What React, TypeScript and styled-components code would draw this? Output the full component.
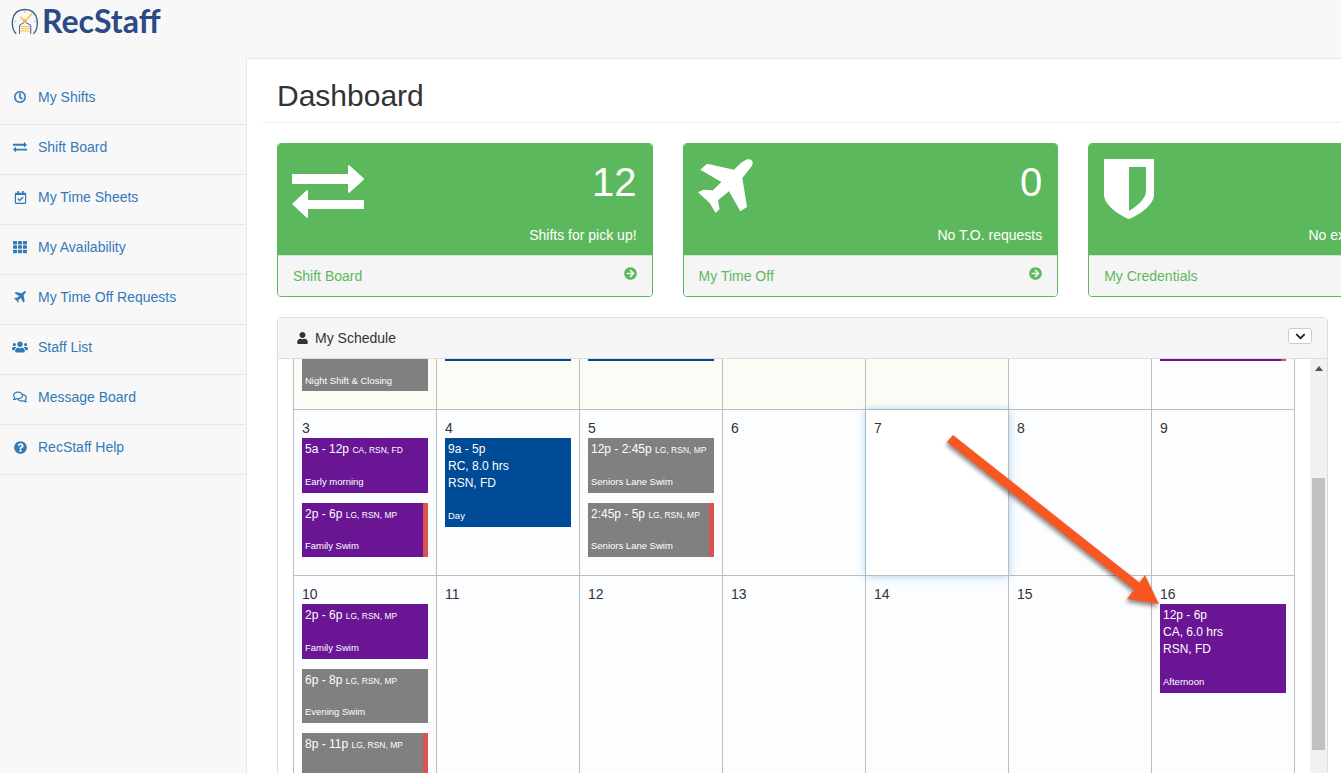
import styled, { createGlobalStyle } from "styled-components";
import {
  FaArrowCircleRight,
  FaChevronDown,
  FaQuestionCircle,
  FaRegCalendarCheck,
  FaRegClock,
  FaRegComments,
  FaTh,
  FaUser,
  FaUsers,
} from "react-icons/fa";

const GlobalStyle = createGlobalStyle`
  html, body {
    margin: 0;
    padding: 0;
    height: 773px;
    overflow: hidden;
    background: #f8f8f8;
    font-family: "Liberation Sans", Arial, sans-serif;
    font-size: 14px;
    line-height: 20px;
    color: #333;
  }
`;

const Page = styled.div`
  position: relative;
  width: 1341px;
  height: 773px;
  overflow: hidden;
`;

const TopBar = styled.header`
  display: flex;
  align-items: flex-start;
  height: 58px;
  padding-left: 11px;
  box-sizing: border-box;
`;

const LogoMark = styled.svg`
  width: 29px;
  height: 28px;
  margin: 8px 2px 0 0;
`;

const LogoWord = styled.span`
  font-family: Lato, sans-serif;
  font-weight: 700;
  font-size: 32px;
  line-height: 42px;
  color: #2b4a86;
`;

const Layout = styled.div`
  display: flex;
  height: 715px;
`;

const Sidebar = styled.nav`
  flex: 0 0 246px;
  padding-top: 17px;
`;

const NavItem = styled.a`
  display: flex;
  align-items: center;
  height: 50px;
  box-sizing: border-box;
  padding-bottom: 5px;
  border-bottom: 1px solid #e7e7e7;
  color: #337ab7;
`;

const NavIcon = styled.span<{ $size: number }>`
  flex: 0 0 14px;
  min-width: 0;
  width: 14px;
  margin: 0 11px 0 13px;
  display: flex;
  align-items: center;
  justify-content: center;
  font-size: ${(p) => p.$size}px;

  svg {
    flex: none;
  }
`;

const Main = styled.main`
  flex: 1;
  min-width: 0;
  background: #fff;
  border-left: 1px solid #e7e7e7;
  border-top: 1px solid #e7e7e7;
  padding-left: 15px;
`;

const PageTitle = styled.h1`
  margin: 0;
  height: 64px;
  box-sizing: border-box;
  padding: 20px 0 0 15px;
  border-bottom: 1px solid #eee;
  font-size: 30px;
  line-height: 33px;
  font-weight: 500;
  color: #333;
`;

const CardRow = styled.div`
  display: flex;
  gap: 30px;
  margin: 20px 0 20px 15px;
`;

const Card = styled.section`
  flex: 0 0 375.6px;
  height: 154px;
  box-sizing: border-box;
  border: 1px solid #5cb85c;
  border-radius: 4px;
  overflow: hidden;
  display: flex;
  flex-direction: column;
`;

const CardBody = styled.div`
  height: 111px;
  background: #5cb85c;
  color: #fff;
  padding: 15px;
  box-sizing: border-box;
  display: flex;
  justify-content: space-between;
`;

const CardIcon = styled.div<{ $top: number }>`
  color: #fff;
  line-height: 0;
  margin: ${(p) => p.$top}px 0 0 -1px;
`;

const CardStats = styled.div`
  text-align: right;
`;

const CardNumber = styled.div`
  font-size: 40px;
  line-height: 44px;
  padding-top: 1px;
  margin-bottom: 21px;
`;

const CardFooter = styled.a`
  flex: 1;
  display: flex;
  justify-content: space-between;
  padding: 10px 15px;
  background: #f5f5f5;
  border-top: 1px solid #ddd;
  color: #5cb85c;

  svg {
    width: 13px;
    height: 13px;
    margin-top: 1px;
  }
`;

const Panel = styled.section`
  width: 1051px;
  margin-left: 15px;
  height: 600px;
  box-sizing: border-box;
  border: 1px solid #ddd;
  border-radius: 4px 4px 0 0;
`;

const PanelHeading = styled.div`
  display: flex;
  align-items: center;
  height: 41px;
  box-sizing: border-box;
  padding: 0 15px 0 19px;
  background: #f5f5f5;
  border-bottom: 1px solid #ddd;

  svg {
    width: 11px;
    height: 12px;
    margin-right: 7px;
    color: #333;
  }
`;

const PanelTitle = styled.span`
  flex: 1;
`;

const CollapseButton = styled.button`
  width: 24px;
  height: 16px;
  padding: 0;
  display: flex;
  align-items: center;
  justify-content: center;
  background: #fff;
  border: 1px solid #ccc;
  border-radius: 3px;
  margin-top: -4px;

  svg {
    margin: 0;
    width: 11px;
    height: 11px;
    color: #222;
  }
`;

const CalendarWrap = styled.div`
  display: flex;
  height: 415px;
  overflow: hidden;
`;

const Calendar = styled.div`
  width: 1002px;
  box-sizing: border-box;
  margin-left: 15px;
  border-left: 1px solid #bdbdbd;
  border-right: 1px solid #bdbdbd;
  flex: none;
`;

const Week = styled.div<{ $height: number; $clipped?: boolean }>`
  display: grid;
  grid-template-columns: repeat(6, 143px) 142px;
  height: ${(p) => p.$height}px;
  box-sizing: border-box;
  border-bottom: ${(p) => (p.$clipped ? "1px solid #bdbdbd" : "none")};
`;

const Day = styled.div<{ $tone?: "old" | "focus"; $clipped?: boolean }>`
  position: relative;
  box-sizing: border-box;
  padding: ${(p) => (p.$clipped ? "0" : "9px")} 8px 0 8px;
  border-right: 1px solid #bdbdbd;
  border-bottom: ${(p) => (p.$clipped ? "none" : "1px solid #bdbdbd")};
  background: ${(p) =>
    p.$tone === "old" ? "#fcfcf6" : p.$tone === "focus" ? "#fff" : "#fbfdff"};
  box-shadow: ${(p) =>
    p.$tone === "focus" ? "0 0 8px rgba(102, 175, 233, 0.6)" : "none"};
  z-index: ${(p) => (p.$tone === "focus" ? 1 : 0)};
  overflow: ${(p) => (p.$clipped ? "hidden" : "visible")};

  &:last-child {
    border-right: none;
  }
`;

const DayNumber = styled.div`
  line-height: 19px;
  font-size: 14px;
  color: #333;
`;

const Shift = styled.div<{ $color: string; $height: number; $flag?: boolean }>`
  height: ${(p) => p.$height}px;
  box-sizing: border-box;
  padding: 3px;
  margin-bottom: 10px;
  display: flex;
  flex-direction: column;
  justify-content: space-between;
  background: ${(p) => p.$color};
  color: #fff;
  font-size: 12px;
  line-height: 17px;
  border-right: ${(p) => (p.$flag ? "5px solid #d9534f" : "none")};
`;

const ShiftTime = styled.div`
  white-space: nowrap;
`;

const ShiftTags = styled.span`
  font-size: 8.5px;
`;

const ShiftLabel = styled.div`
  font-size: 9.5px;
  line-height: 12px;
  padding-bottom: 2px;
`;

const TopSliver = styled.div<{ $color: string; $flag?: boolean }>`
  height: 2px;
  background: ${(p) => p.$color};
  border-right: ${(p) => (p.$flag ? "5px solid #d9534f" : "none")};
`;

const ClippedNight = styled.div`
  height: 32px;
  background: #808080;
  color: #fff;
  font-size: 9.5px;
  line-height: 12px;
  padding: 16px 3px 0;
  box-sizing: border-box;
`;

const ScrollTrack = styled.div`
  flex: none;
  width: 17px;
  margin-left: 15px;
  background: #f1f1f1;
  position: relative;
`;

const ScrollThumb = styled.div`
  position: absolute;
  left: 2px;
  right: 2px;
  top: 119px;
  height: 272px;
  background: #c1c1c1;
`;

const ScrollUp = styled.div`
  width: 0;
  height: 0;
  margin: 7px auto 0;
  border: 4px solid transparent;
  border-top: none;
  border-bottom: 5px solid #505050;
`;

const ArrowOverlay = styled.svg`
  position: absolute;
  left: 0;
  top: 0;
  z-index: 2;
  width: 1341px;
  height: 773px;
  pointer-events: none;
  filter: drop-shadow(-1px 3px 2px rgba(0, 0, 0, 0.45));
`;

const ExchangeIcon = ({ size }: { size: number }) => (
  <svg width={size} height={(size * 54) / 72} viewBox="0 0 72 54" fill="currentColor">
    <path d="M0 9h56V1l1 -1 15.5 14L57 28l-1 -1v-8H0z" />
    <path d="M72 35H16v-9l-1 -1L0 39l15 14 1 -1v-8h56z" />
  </svg>
);

const PlaneIcon = ({ size }: { size: number }) => (
  <svg width={size} height={size} viewBox="25 28 165 165" fill="currentColor">
    <path d="M133 60L52 42 32 60 95 97 70 122 42 120 25 128 60 160 78 190 90 178 85 152 118 125 152 185 172 172 158 85 186 50C194 36 186 26 170 30 158 34 146 46 133 60z" />
  </svg>
);

const ShieldIcon = () => (
  <svg width="52" height="60" viewBox="0 0 52 60" fill="currentColor">
    <path
      fillRule="evenodd"
      d="M1 0h50v36c0 9-14 20-25 24C15 56 1 45 1 36zM26 8v44c8-5 17-12 17-20V8z"
    />
  </svg>
);

const LogoIcon = () => (
  <LogoMark viewBox="18 20 88 84">
    <path d="M34 98C14 80 16 24 60 24 104 24 106 80 86 98" fill="none" stroke="#3b5a92" strokeWidth="4" />
    <path d="M44 98V72L60 62 78 72V98" fill="none" stroke="#3b5a92" strokeWidth="3" />
    <path d="M60 60L46 46M60 60L82 36M60 28v6M28 60h6M88 60h6" stroke="#f5bd3c" strokeWidth="4" fill="none" />
    <circle cx="60" cy="60" r="6" fill="#f5bd3c" />
    <path d="M48 74h27v3H48zM48 81h27v3H48zM48 88h27v3H48z" fill="#f5bd3c" />
  </LogoMark>
);

const navItems = [
  { label: "My Shifts", size: 12, icon: <FaRegClock stroke="currentColor" strokeWidth={24} /> },
  { label: "Shift Board", size: 14, icon: <ExchangeIcon size={14} /> },
  { label: "My Time Sheets", size: 13, icon: <FaRegCalendarCheck /> },
  { label: "My Availability", size: 14, icon: <FaTh /> },
  { label: "My Time Off Requests", size: 12, icon: <PlaneIcon size={12} /> },
  { label: "Staff List", size: 16, icon: <FaUsers /> },
  { label: "Message Board", size: 14, icon: <FaRegComments /> },
  { label: "RecStaff Help", size: 13, icon: <FaQuestionCircle /> },
];

const PURPLE = "#691594";
const BLUE = "#004b96";
const GREY = "#808080";

type ShiftData = {
  color: string;
  height: number;
  time: string;
  tags?: string;
  lines?: string[];
  label?: string;
  flag?: boolean;
};

const short = 54.6;
const tall = 89;

const weeks: { height: number; days: { n: number; shifts?: ShiftData[]; focus?: boolean }[] }[] = [
  {
    height: 166,
    days: [
      {
        n: 3,
        shifts: [
          { color: PURPLE, height: short, time: "5a - 12p", tags: "CA, RSN, FD", label: "Early morning" },
          { color: PURPLE, height: short, time: "2p - 6p", tags: "LG, RSN, MP", label: "Family Swim", flag: true },
        ],
      },
      {
        n: 4,
        shifts: [
          { color: BLUE, height: tall, time: "9a - 5p", lines: ["RC, 8.0 hrs", "RSN, FD"], label: "Day" },
        ],
      },
      {
        n: 5,
        shifts: [
          { color: GREY, height: short, time: "12p - 2:45p", tags: "LG, RSN, MP", label: "Seniors Lane Swim" },
          { color: GREY, height: short, time: "2:45p - 5p", tags: "LG, RSN, MP", label: "Seniors Lane Swim", flag: true },
        ],
      },
      { n: 6 },
      { n: 7, focus: true },
      { n: 8 },
      { n: 9 },
    ],
  },
  {
    height: 198,
    days: [
      {
        n: 10,
        shifts: [
          { color: PURPLE, height: short, time: "2p - 6p", tags: "LG, RSN, MP", label: "Family Swim" },
          { color: GREY, height: short, time: "6p - 8p", tags: "LG, RSN, MP", label: "Evening Swim" },
          { color: GREY, height: short, time: "8p - 11p", tags: "LG, RSN, MP", flag: true },
        ],
      },
      { n: 11 },
      { n: 12 },
      { n: 13 },
      { n: 14 },
      { n: 15 },
      {
        n: 16,
        shifts: [
          { color: PURPLE, height: tall, time: "12p - 6p", lines: ["CA, 6.0 hrs", "RSN, FD"], label: "Afternoon" },
        ],
      },
    ],
  },
];

const stats = [
  { icon: <ExchangeIcon size={72} />, top: 6, count: "12", text: "Shifts for pick up!", link: "Shift Board" },
  { icon: <PlaneIcon size={55} />, top: 0, count: "0", text: "No T.O. requests", link: "My Time Off" },
  { icon: <ShieldIcon />, top: 0, count: "0", text: "No expired credentials", link: "My Credentials" },
];

const App = () => (
  <Page>
    <GlobalStyle />
    <TopBar>
      <LogoIcon />
      <LogoWord>RecStaff</LogoWord>
    </TopBar>
    <Layout>
      <Sidebar>
        {navItems.map((item) => (
          <NavItem key={item.label}>
            <NavIcon $size={item.size}>{item.icon}</NavIcon>
            {item.label}
          </NavItem>
        ))}
      </Sidebar>
      <Main>
        <PageTitle>Dashboard</PageTitle>
        <CardRow>
          {stats.map((s) => (
            <Card key={s.link}>
              <CardBody>
                <CardIcon $top={s.top}>{s.icon}</CardIcon>
                <CardStats>
                  <CardNumber>{s.count}</CardNumber>
                  {s.text}
                </CardStats>
              </CardBody>
              <CardFooter>
                {s.link}
                <FaArrowCircleRight />
              </CardFooter>
            </Card>
          ))}
        </CardRow>
        <Panel>
          <PanelHeading>
            <FaUser />
            <PanelTitle>My Schedule</PanelTitle>
            <CollapseButton>
              <FaChevronDown />
            </CollapseButton>
          </PanelHeading>
          <CalendarWrap>
            <Calendar>
              <Week $height={51} $clipped>
                <Day $tone="old" $clipped>
                  <ClippedNight>Night Shift &amp; Closing</ClippedNight>
                </Day>
                <Day $tone="old" $clipped>
                  <TopSliver $color={BLUE} />
                </Day>
                <Day $tone="old" $clipped>
                  <TopSliver $color={BLUE} />
                </Day>
                <Day $tone="old" $clipped />
                <Day $tone="old" $clipped />
                <Day $clipped />
                <Day $clipped>
                  <TopSliver $color={PURPLE} $flag />
                </Day>
              </Week>
              {weeks.map((week) => (
                <Week key={week.days[0].n} $height={week.height}>
                  {week.days.map((day) => (
                    <Day key={day.n} $tone={day.focus ? "focus" : undefined}>
                      <DayNumber>{day.n}</DayNumber>
                      {day.shifts?.map((shift) => (
                        <Shift
                          key={shift.time}
                          $color={shift.color}
                          $height={shift.height}
                          $flag={shift.flag}
                        >
                          <div>
                            <ShiftTime>
                              {shift.time} {shift.tags && <ShiftTags>{shift.tags}</ShiftTags>}
                            </ShiftTime>
                            {shift.lines?.map((line) => (
                              <div key={line}>{line}</div>
                            ))}
                          </div>
                          {shift.label && <ShiftLabel>{shift.label}</ShiftLabel>}
                        </Shift>
                      ))}
                    </Day>
                  ))}
                </Week>
              ))}
            </Calendar>
            <ScrollTrack>
              <ScrollUp />
              <ScrollThumb />
            </ScrollTrack>
          </CalendarWrap>
        </Panel>
      </Main>
    </Layout>
    <ArrowOverlay viewBox="0 0 1341 773">
      <polygon
        points="953,435 1139.5,582.5 1145,575 1159,604 1127,599 1134,589.7 947,442"
        fill="#f95721"
      />
    </ArrowOverlay>
  </Page>
);

export default App;
